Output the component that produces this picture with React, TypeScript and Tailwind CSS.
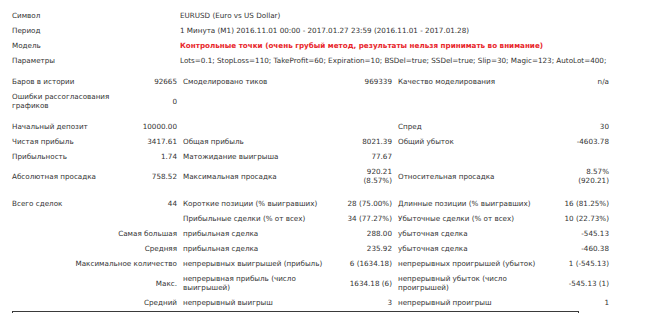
import type { ReactNode } from 'react'

type Cell = ReactNode

function Row({ cells, tall }: { cells: Cell[]; tall?: boolean }) {
  const [l1, v1, l2, v2, l3, v3] = cells
  return (
    <tr className={tall ? 'h-[24px]' : 'h-[15px]'}>
      <td className="px-[3px] align-middle whitespace-nowrap">{l1}</td>
      <td className="px-[3px] text-right align-middle whitespace-nowrap">{v1}</td>
      <td className="px-[3px] align-middle whitespace-nowrap">{l2}</td>
      <td className="px-[3px] text-right align-middle whitespace-nowrap">{v2}</td>
      <td className="px-[3px] align-middle whitespace-nowrap">{l3}</td>
      <td className="px-[3px] text-right align-middle whitespace-nowrap">{v3}</td>
    </tr>
  )
}

function SubRow({ head, cells, tall }: { head: string; cells: Cell[]; tall?: boolean }) {
  const [l2, v2, l3, v3] = cells
  return (
    <tr className={tall ? 'h-[24px]' : 'h-[15px]'}>
      <td colSpan={2} className="px-[3px] text-right align-middle whitespace-nowrap">{head}</td>
      <td className="px-[3px] align-middle whitespace-nowrap">{l2}</td>
      <td className="px-[3px] text-right align-middle whitespace-nowrap">{v2}</td>
      <td className="px-[3px] align-middle whitespace-nowrap">{l3}</td>
      <td className="px-[3px] text-right align-middle whitespace-nowrap">{v3}</td>
    </tr>
  )
}

function HeadRow({ label, children }: { label: string; children: ReactNode }) {
  return (
    <tr className="h-[15px]">
      <td colSpan={2} className="px-[3px] align-middle whitespace-nowrap">{label}</td>
      <td colSpan={4} className="pl-0 pr-[3px] align-middle whitespace-nowrap">{children}</td>
    </tr>
  )
}

function Spacer({ h }: { h: string }) {
  return (
    <tr className={h}>
      <td colSpan={6} className="p-0" />
    </tr>
  )
}

export default function App() {
  return (
    <div className="w-[650px] h-[313px] overflow-hidden bg-white text-[#333] font-['DejaVu_Sans',sans-serif] text-[7.2px] leading-[9px]">
      <table className="table-fixed border-collapse ml-[9px] mt-[8px] w-[603px]">
        <colgroup>
          <col className="w-[101px]" />
          <col className="w-[70px]" />
          <col className="w-[149px]" />
          <col className="w-[66px]" />
          <col className="w-[150px]" />
          <col className="w-[67px]" />
        </colgroup>
        <tbody>
          <HeadRow label="Символ">EURUSD (Euro vs US Dollar)</HeadRow>
          <HeadRow label="Период">1 Минута (M1) 2016.11.01 00:00 - 2017.01.27 23:59 (2016.11.01 - 2017.01.28)</HeadRow>
          <HeadRow label="Модель">
            <span className="font-bold text-[#e8262b]">
              Контрольные точки (очень грубый метод, результаты нельзя принимать во внимание)
            </span>
          </HeadRow>
          <HeadRow label="Параметры">
            Lots=0.1; StopLoss=110; TakeProfit=60; Expiration=10; BSDel=true; SSDel=true; Slip=30; Magic=123; AutoLot=400;
          </HeadRow>
          <Spacer h="h-[6px]" />
          <Row cells={['Баров в истории', '92665', 'Смоделировано тиков', '969339', 'Качество моделирования', 'n/a']} />
          <Row
            tall
            cells={[
              <>Ошибки рассогласования<br />графиков</>,
              '0',
              '',
              '',
              '',
              '',
            ]}
          />
          <Spacer h="h-[6px]" />
          <Row cells={['Начальный депозит', '10000.00', '', '', 'Спред', '30']} />
          <Row cells={['Чистая прибыль', '3417.61', 'Общая прибыль', '8021.39', 'Общий убыток', '-4603.78']} />
          <Row cells={['Прибыльность', '1.74', 'Матожидание выигрыша', '77.67', '', '']} />
          <Row
            tall
            cells={[
              'Абсолютная просадка',
              '758.52',
              'Максимальная просадка',
              <>920.21<br />(8.57%)</>,
              'Относительная просадка',
              <>8.57%<br />(920.21)</>,
            ]}
          />
          <Spacer h="h-[8px]" />
          <Row
            cells={[
              'Всего сделок',
              '44',
              'Короткие позиции (% выигравших)',
              '28 (75.00%)',
              'Длинные позиции (% выигравших)',
              '16 (81.25%)',
            ]}
          />
          <Row
            cells={['', '', 'Прибыльные сделки (% от всех)', '34 (77.27%)', 'Убыточные сделки (% от всех)', '10 (22.73%)']}
          />
          <SubRow head="Самая большая" cells={['прибыльная сделка', '288.00', 'убыточная сделка', '-545.13']} />
          <SubRow head="Средняя" cells={['прибыльная сделка', '235.92', 'убыточная сделка', '-460.38']} />
          <SubRow
            head="Максимальное количество"
            cells={['непрерывных выигрышей (прибыль)', '6 (1634.18)', 'непрерывных проигрышей (убыток)', '1 (-545.13)']}
          />
          <SubRow
            tall
            head="Макс."
            cells={[
              <>непрерывная прибыль (число<br />выигрышей)</>,
              '1634.18 (6)',
              <>непрерывный убыток (число<br />проигрышей)</>,
              '-545.13 (1)',
            ]}
          />
          <SubRow head="Средний" cells={['непрерывный выигрыш', '3', 'непрерывный проигрыш', '1']} />
        </tbody>
      </table>
      <div className="ml-[12px] mt-[1px] w-[567px] h-[30px] border border-[#3a3a3a]" />
    </div>
  )
}
